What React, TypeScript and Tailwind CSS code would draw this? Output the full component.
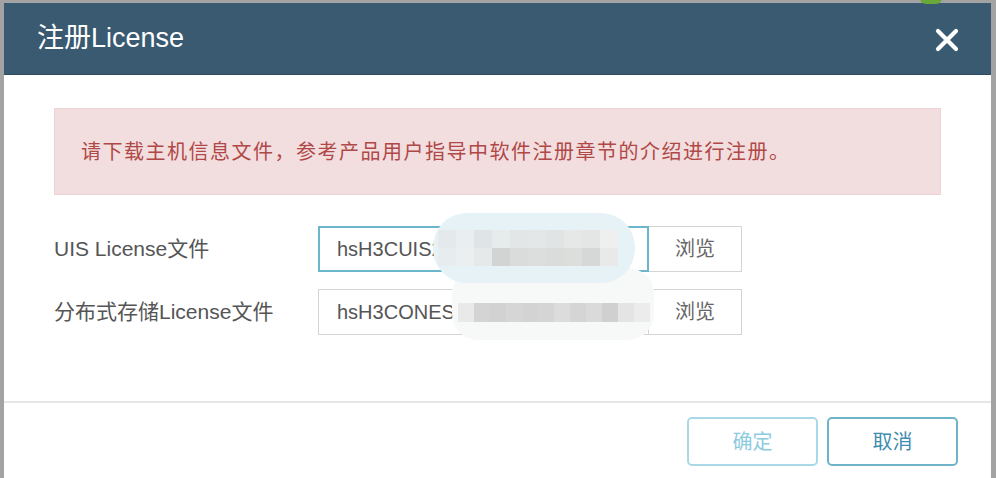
import React from 'react';

const font = { fontFamily: '"Liberation Sans", "Noto Sans CJK SC", sans-serif' };

// pixelated mosaic cells that hide the file names
const mosaicTop = [
    ['#e4eaec', '#e9eef0', '#dfe5e6', '#e6ebec', '#e2e6e6', '#e4e7e7', '#e1e4e4', '#e6e8e8', '#e3e6e5', '#eeefee'],
    ['#e7ecee', '#ebefef', '#e5e9ea', '#d2d4d4', '#dadcdb', '#dcdedd', '#dadcdb', '#dcdedc', '#d6d8d7', '#e8e9e8'],
];
const mosaicBottom = ['#e9e9e9', '#d4d4d4', '#d2d2d2', '#d6d6d6', '#d3d3d3', '#d5d5d5', '#dcdcdc', '#d5d5d5', '#dadada', '#d0d0d0', '#e4e4e4', '#ececec'];

function FileRow({ label, value, focused }: { label: string; value: string; focused?: boolean }) {
    return (
        <div className="flex items-center">
            <div className="w-[264px] text-[21px] text-[#555]">{label}</div>
            <div
                className={
                    focused
                        ? 'flex h-[46px] w-[331px] items-center border-2 border-[#6cb6cc] px-[17px] text-[20px] text-[#555]'
                        : 'flex h-[46px] w-[331px] items-center border border-[#d4d4d4] px-[18px] text-[20px] text-[#555]'
                }
            >
                <span className="whitespace-nowrap">{value}</span>
            </div>
            <button
                type="button"
                className="flex h-[46px] w-[93px] items-center justify-center border border-l-0 border-[#d4d4d4] bg-white text-[20px] text-[#666]"
            >
                浏览
            </button>
        </div>
    );
}

export default function App() {
    return (
        <div className="relative h-[478px] w-[996px] overflow-hidden bg-[#a3a3a3]" style={font}>
            <div className="absolute left-[920px] top-[-8px] h-[12px] w-[22px] rounded-full bg-[#6aa83a]" />
            <div className="ml-[4px] mt-[3px] flex h-[500px] w-[987px] flex-col bg-white">
                <div className="flex h-[72px] items-center justify-between border-b border-[#2e4a5e] bg-[#3a5a72] pl-[33px] pr-[32px]">
                    <span className="text-[27px] text-white">注册License</span>
                    <svg width="24" height="24" viewBox="0 0 24 24" className="mt-[2px]">
                        <path d="M3 3 L21 21 M21 3 L3 21" stroke="#fff" strokeWidth="4.2" strokeLinecap="round" />
                    </svg>
                </div>

                <div className="px-[50px] pt-[33px]">
                    <div className="flex h-[87px] items-center border border-[#ebd3d6] bg-[#f2dede] pl-[26px] text-[20px] tracking-[1.5px] text-[#b04848]">
                        请下载主机信息文件，参考产品用户指导中软件注册章节的介绍进行注册。
                    </div>

                    <div className="relative mt-[31px] flex flex-col gap-[17px]">
                        <FileRow label="UIS License文件" value="hsH3CUIS20190712.lic" focused />
                        <FileRow label="分布式存储License文件" value="hsH3CONES20190712.lic" />

                        <div className="absolute left-[398px] top-[42px] h-[72px] w-[202px] rounded-[26px] bg-[#f7f8f8]">
                            <div className="ml-[6px] mt-[35px] flex">
                                {mosaicBottom.map((c, i) => (
                                    <div key={i} className="h-[19px] w-[16px]" style={{ background: c }} />
                                ))}
                            </div>
                        </div>
                        <div className="absolute left-[379px] top-[-13px] h-[70px] w-[202px] rounded-[34px] bg-[#e6f2f5]">
                            <div className="ml-[5px] mt-[17px] flex flex-col">
                                {mosaicTop.map((row, r) => (
                                    <div key={r} className="flex">
                                        {row.map((c, i) => (
                                            <div key={i} className="h-[18px] w-[18px]" style={{ background: c }} />
                                        ))}
                                    </div>
                                ))}
                            </div>
                        </div>
                    </div>
                </div>

                <div className="mt-[66px] border-t-2 border-[#e6e6e6]" />

                <div className="flex justify-end gap-[9px] pr-[33px] pt-[14px]">
                    <button
                        type="button"
                        className="flex h-[49px] w-[131px] items-center justify-center rounded-[5px] border-2 border-[#a9d9e6] bg-white text-[20px] text-[#8ccbe0]"
                    >
                        确定
                    </button>
                    <button
                        type="button"
                        className="flex h-[49px] w-[131px] items-center justify-center rounded-[5px] border-2 border-[#6fb3c9] bg-white text-[20px] text-[#3f8db0]"
                    >
                        取消
                    </button>
                </div>
            </div>
        </div>
    );
}
